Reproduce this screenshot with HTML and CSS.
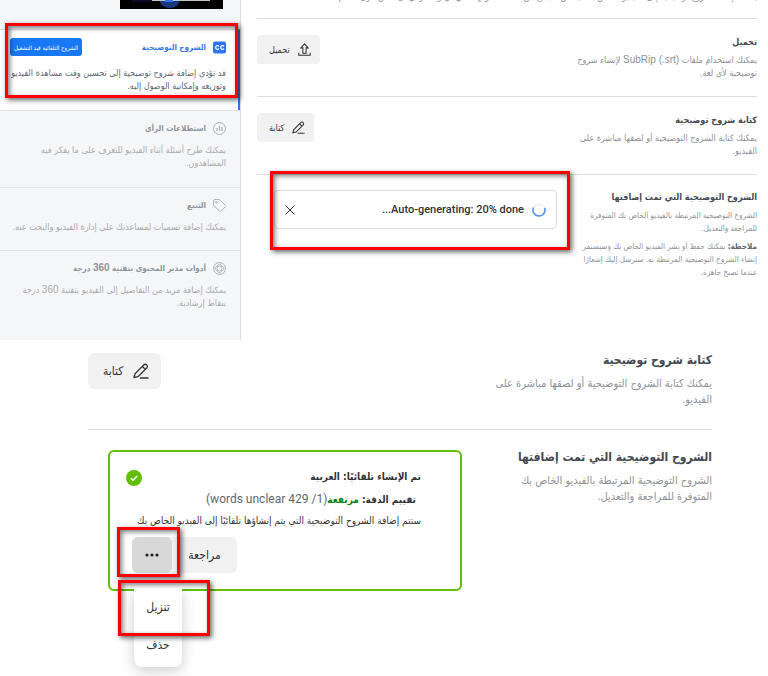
FILE: index.html
```html
<!DOCTYPE html>
<html lang="ar" dir="rtl">
<head>
    <meta charset="UTF-8">
    <meta name="viewport" content="width=device-width, initial-scale=1.0">
    <title>الشروح التوضيحية</title>
    <link rel="stylesheet" href="styles.css">
</head>
<body>
    <!-- Video editor -->
    <div class="editor">
        <main class="main">
            <div class="row row-intro">
                <p class="intro">يمكنك إضافة شروح توضيحية إلى الفيديو الخاص بك ليتمكن الجميع من مشاهدته وفهمه في أي وقت وفي أي مكان حول العالم.</p>
            </div>
            <div class="row">
                <div class="info">
                    <h3>تحميل</h3>
                    <p>يمكنك استخدام ملفات <bdi class="latin">SubRip (.srt)</bdi> لإنشاء شروح<br>توضيحية لأي لغة.</p>
                </div>
                <button type="button" class="btn">
                    <svg class="icon" viewBox="0 0 16 16"><path d="M8 1 3.500 6H6v6.500h4V6h2.500zM1 12v3h14v-3"/></svg>
                    تحميل
                </button>
            </div>
            <div class="row">
                <div class="info">
                    <h3>كتابة شروح توضيحية</h3>
                    <p>يمكنك كتابة الشروح التوضيحية أو لصقها مباشرة على<br>الفيديو.</p>
                </div>
                <button type="button" class="btn">
                    <svg class="icon" viewBox="0 0 16 16"><path d="M1 14.500 2 10.800 10.700 2a2 2 0 0 1 3 3L5 13.700zM9.500 3.500l2.700 2.700M7 15h8.500"/></svg>
                    كتابة
                </button>
            </div>
            <div class="row row-last">
                <div class="info">
                    <h3>الشروح التوضيحية التي تمت إضافتها</h3>
                    <p>الشروح التوضيحية المرتبطة بالفيديو الخاص بك المتوفرة<br>للمراجعة والتعديل.</p>
                    <p class="note"><b>ملاحظة:</b> يمكنك حفظ أو نشر الفيديو الخاص بك وسيستمر<br>إنشاء الشروح التوضيحية المرتبطة به. سنرسل إليك إشعارًا<br>عندما تصبح جاهزة.</p>
                </div>
                <div class="progress">
                    <svg class="spinner" viewBox="0 0 14 14"><circle cx="7" cy="7" r="6"/><path d="M12.600 5A6 6 0 1 1 1.500 4.500"/></svg>
                    <span class="progress-text">Auto-generating: 20% done...</span>
                    <button type="button" class="close" aria-label="إغلاق">
                        <svg viewBox="0 0 10 10"><path d="M.5.5l9 9M9.500.5l-9 9"/></svg>
                    </button>
                </div>
                <div class="mark mark-progress"></div>
            </div>
        </main>

        <aside class="sidebar">
            <div class="thumb">
                <svg viewBox="0 0 103 9" preserveAspectRatio="none"><path fill="#000" d="M0 0h103v9H0z"/><path fill="#0b0b28" d="M12 0h20v2H12z"/><path fill="#19377c" d="M39 0h21c-1 5-5 8-10 8S40 5 39 0z"/><path fill="#b9c9c9" d="M32 0h58v1H32z"/><path fill="#3373e5" d="M45 0h8v2h-8z"/></svg>
            </div>
            <section class="tool tool-active">
                <div class="tool-head">
                    <svg class="tool-icon" viewBox="0 0 13 13"><rect width="13" height="12" y=".5" rx="2" fill="#2f73ee"/><path d="M6 5.300a1.900 1.900 0 1 0 0 2.400M11 5.300a1.900 1.900 0 1 0 0 2.400" stroke="#fff" stroke-width="1.200"/></svg>
                    <h4>الشروح التوضيحية</h4>
                    <button type="button" class="badge">الشروح التلقائية قيد التشغيل</button>
                </div>
                <p>قد تؤدي إضافة شروح توضيحية إلى تحسين وقت مشاهدة الفيديو<br>وتوزيعه وإمكانية الوصول إليه.</p>
                <div class="mark mark-tool"></div>
            </section>
            <section class="tool tool-polls">
                <div class="tool-head">
                    <svg class="tool-icon" viewBox="0 0 13 13"><circle cx="6.500" cy="6.500" r="6"/><path d="M4 6v3M6.500 4v5M9 5v4" stroke-width="1.300"/></svg>
                    <h4>استطلاعات الرأي</h4>
                </div>
                <p>يمكنك طرح أسئلة أثناء الفيديو للتعرف على ما يفكر فيه<br>المشاهدون.</p>
            </section>
            <section class="tool tool-tags">
                <div class="tool-head">
                    <svg class="tool-icon" viewBox="0 0 13 13"><path d="M.5 2a1.500 1.500 0 0 1 1.500-1.500h4.500l6 6a1 1 0 0 1 0 1.200l-4.500 4.500a1 1 0 0 1-1.200 0L.5 6.500z"/><circle cx="3.300" cy="3.300" r=".8"/></svg>
                    <h4>التتبع</h4>
                </div>
                <p>يمكنك إضافة تسميات لمساعدتك على إدارة الفيديو والبحث عنه.</p>
            </section>
            <section class="tool">
                <div class="tool-head">
                    <svg class="tool-icon" viewBox="0 0 13 13"><circle cx="6.500" cy="6.500" r="6"/><ellipse cx="6.500" cy="6.500" rx="4.500" ry="2.300"/><ellipse cx="6.500" cy="6.500" rx="2.300" ry="4.500"/></svg>
                    <h4>أدوات مدير المحتوى بتقنية <span class="latin">360</span> درجة</h4>
                </div>
                <p>يمكنك إضافة مزيد من التفاصيل إلى الفيديو بتقنية <span class="latin">360</span> درجة<br>بنقاط إرشادية.</p>
            </section>
        </aside>
    </div>

    <!-- Captions list -->
    <div class="captions">
        <div class="row">
            <div class="info">
                <h3>كتابة شروح توضيحية</h3>
                <p>يمكنك كتابة الشروح التوضيحية أو لصقها مباشرة على<br>الفيديو.</p>
            </div>
            <button type="button" class="btn">
                <svg class="icon" viewBox="0 0 16 16"><path d="M1 14.500 2 10.800 10.700 2a2 2 0 0 1 3 3L5 13.700zM9.500 3.500l2.700 2.700M7 15h8.500"/></svg>
                كتابة
            </button>
        </div>
        <div class="row row-last">
            <div class="info">
                <h3>الشروح التوضيحية التي تمت إضافتها</h3>
                <p>الشروح التوضيحية المرتبطة بالفيديو الخاص بك<br>المتوفرة للمراجعة والتعديل.</p>
            </div>
            <div class="card">
                <div class="card-text">
                    <strong>تم الإنشاء تلقائيًا: العربية</strong>
                    <div class="rating"><strong>تقييم الدقة: <span class="high">مرتفعة</span></strong><span dir="ltr" class="words">(words unclear 429 /1)</span></div>
                    <p>ستتم إضافة الشروح التوضيحية التي يتم إنشاؤها تلقائيًا إلى الفيديو الخاص بك</p>
                </div>
                <svg class="check" viewBox="0 0 16 16"><circle cx="8" cy="8" r="8" fill="#63be09"/><path d="M4.800 8.200 7 10.300l4.200-4.400" fill="none" stroke="#fff" stroke-width="1.500"/></svg>
                <div class="actions">
                    <button type="button" class="review">مراجعة</button>
                    <button type="button" class="more" aria-label="المزيد">
                        <svg viewBox="0 0 14 4"><circle cx="2" cy="2" r="1.600"/><circle cx="7" cy="2" r="1.600"/><circle cx="12" cy="2" r="1.600"/></svg>
                    </button>
                </div>
                <div class="menu">
                    <button type="button">تنزيل</button>
                    <button type="button">حذف</button>
                </div>
                <div class="mark mark-more"></div>
                <div class="mark mark-download"></div>
            </div>
        </div>
    </div>
</body>
</html>
```

FILE: styles.css
```css
* {
    box-sizing: border-box;
}

body {
    margin: 0;
    font-family: "DejaVu Sans Condensed", "DejaVu Sans", sans-serif;
    font-size: 9px;
    line-height: 13px;
    color: #8d9197;
    background-color: #fff;
}

h3, h4, p {
    margin: 0;
}

button {
    font-family: inherit;
    border: none;
    cursor: pointer;
}

p, h3, h4, strong, button {
    white-space: nowrap;
}

svg {
    display: block;
    flex: none;
}

.latin {
    font-family: "Liberation Sans", Arial, sans-serif;
    font-size: 10px;
    line-height: 1;
}

/* Video editor */
.editor {
    display: flex;
    height: 340px;
    overflow: hidden;
}

.main {
    flex: 1;
    padding: 0 11px 0 16px;
}

.row {
    display: flex;
    justify-content: space-between;
    align-items: flex-start;
    border-bottom: 1px solid #dadde1;
}

.main .row {
    height: 78px;
    padding-top: 16px;
    position: relative;
}

.main .row-intro {
    height: 19px;
    padding: 0;
}

.intro {
    margin-top: -9px;
}

.row.row-last {
    border-bottom: none;
}

.main .row-last {
    padding-top: 15px;
}

.main .row-last p {
    font-size: 8px;
}

.info {
    width: 180px;
}

.info h3 {
    margin-bottom: 4px;
    font-size: 9px;
    line-height: 15px;
    color: #444950;
}

.info .note {
    margin-top: 5px;
}

.note b {
    color: #606770;
}

.btn {
    display: flex;
    align-items: center;
    gap: 8px;
    height: 29px;
    padding: 0 9px 0 12px;
    border-radius: 4px;
    background-color: #f1f1f1;
    color: #333;
    font-size: 9px;
}

.icon {
    width: 13px;
    height: 13px;
    fill: none;
    stroke: #333;
    stroke-width: 1.3;
}

.progress {
    display: flex;
    align-items: center;
    gap: 8px;
    width: 283px;
    height: 39px;
    margin-left: 17px;
    margin-right: auto;
    padding: 0 10px;
    border: 1px solid #dadde1;
    border-radius: 4px;
}

.spinner {
    width: 14px;
    height: 14px;
    fill: none;
    stroke: #e4e6eb;
}

.spinner path {
    stroke: #4a90f0;
    stroke-width: 1.5;
}

.progress-text {
    flex: 1;
    font-family: Roboto, sans-serif;
    font-weight: 500;
    font-size: 11px;
    color: #333;
}

.close {
    padding: 0;
    background: none;
}

.close svg {
    width: 10px;
    height: 10px;
    stroke: #333;
}

/* Sidebar */
.sidebar {
    width: 241px;
    border-right: 1px solid #dadde1;
    background-color: #f5f6f7;
}

.thumb {
    height: 29px;
    padding-right: 17px;
}

.thumb svg {
    width: 103px;
    height: 9px;
}

.tool {
    padding: 10px 14px 0 0;
    border-top: 1px solid #dfe1e5;
    color: #a8abb0;
}

.tool-head {
    display: flex;
    align-items: center;
    gap: 7px;
    height: 14px;
    margin-bottom: 9px;
}

.tool-icon {
    width: 13px;
    height: 13px;
    fill: none;
    stroke: #b0b3b8;
}

.tool h4 {
    font-size: 8px;
    color: #8d949e;
}

.tool-active {
    position: relative;
    height: 81px;
    border-right: 2px solid #3578e5;
    padding-right: 12px;
    background-color: #fff;
    color: #606770;
}

.tool-active .tool-icon {
    stroke: none;
}

.tool-active h4 {
    color: #3578e5;
}

.tool-active .tool-head {
    margin-bottom: 13px;
}

.tool-polls {
    height: 77px;
}

.tool-tags {
    height: 63px;
}

.badge {
    height: 18px;
    margin-right: auto;
    margin-left: 10px;
    padding: 0 4px;
    border-radius: 3px;
    background-color: #1877f2;
    color: #fff;
    font-size: 6px;
}

/* Captions list */
.captions {
    padding: 0 56px 85px 88px;
    font-size: 11px;
    line-height: 16px;
}

.captions .row {
    height: 90px;
    padding-top: 13px;
}

.captions .row-last {
    height: auto;
    padding-top: 20px;
}

.captions .info {
    width: 230px;
}

.captions .info h3 {
    font-size: 12px;
    margin-bottom: 8px;
}

.captions .btn {
    height: 36px;
    gap: 10px;
    padding: 0 12px 0 15px;
    border-radius: 6px;
    font-size: 12px;
}

.captions .icon {
    width: 16px;
    height: 16px;
}

.card {
    position: relative;
    width: 354px;
    height: 141px;
    margin-left: 20px;
    margin-right: auto;
    padding: 14px 39px 0 16px;
    border: 2px solid #63be09;
    border-radius: 6px;
    color: #333;
}

.card-text {
    font-size: 10px;
    line-height: 22px;
}

.card-text p {
    line-height: 20px;
}

.rating {
    padding-right: 5px;
    white-space: nowrap;
}

.high {
    color: #0a8212;
}

.words {
    font-family: Roboto, sans-serif;
    font-size: 12px;
    color: #606770;
}

.check {
    position: absolute;
    left: 16px;
    top: 18px;
    width: 16px;
    height: 16px;
}

.actions {
    position: absolute;
    left: 22px;
    top: 85px;
    display: flex;
    height: 36px;
    border-radius: 6px;
    background-color: #f1f1f1;
}

.review {
    width: 65px;
    background: none;
    color: #333;
    font-size: 12px;
}

.more {
    display: flex;
    align-items: center;
    justify-content: center;
    width: 40px;
    border-radius: 6px;
    background-color: #d8d8d8;
}

.more svg {
    width: 14px;
    height: 4px;
    fill: #222;
}

.menu {
    position: absolute;
    left: 24px;
    top: 136px;
    width: 48px;
    height: 79px;
    border-radius: 0 0 8px 8px;
    background-color: #fff;
    box-shadow: 0 4px 14px rgba(0, 0, 0, 0.2);
    clip-path: inset(0 -20px -20px -20px);
}

.menu button {
    display: block;
    width: 100%;
    height: 38px;
    padding: 0;
    background: none;
    color: #333;
    font-size: 12px;
}

/* Red highlight frames */
.mark {
    position: absolute;
    border: 3px solid #f00;
    box-shadow: 2px 2px 5px rgba(0, 0, 0, 0.6), inset 2px 2px 5px rgba(0, 0, 0, 0.5);
    pointer-events: none;
}

.mark-progress {
    left: 13px;
    top: -4px;
    width: 300px;
    height: 79px;
}

.mark-tool {
    left: 5px;
    top: -7px;
    width: 233px;
    height: 75px;
}

.mark-more {
    left: 7px;
    top: 75px;
    width: 63px;
    height: 50px;
}

.mark-download {
    left: 8px;
    top: 128px;
    width: 92px;
    height: 56px;
}
```
